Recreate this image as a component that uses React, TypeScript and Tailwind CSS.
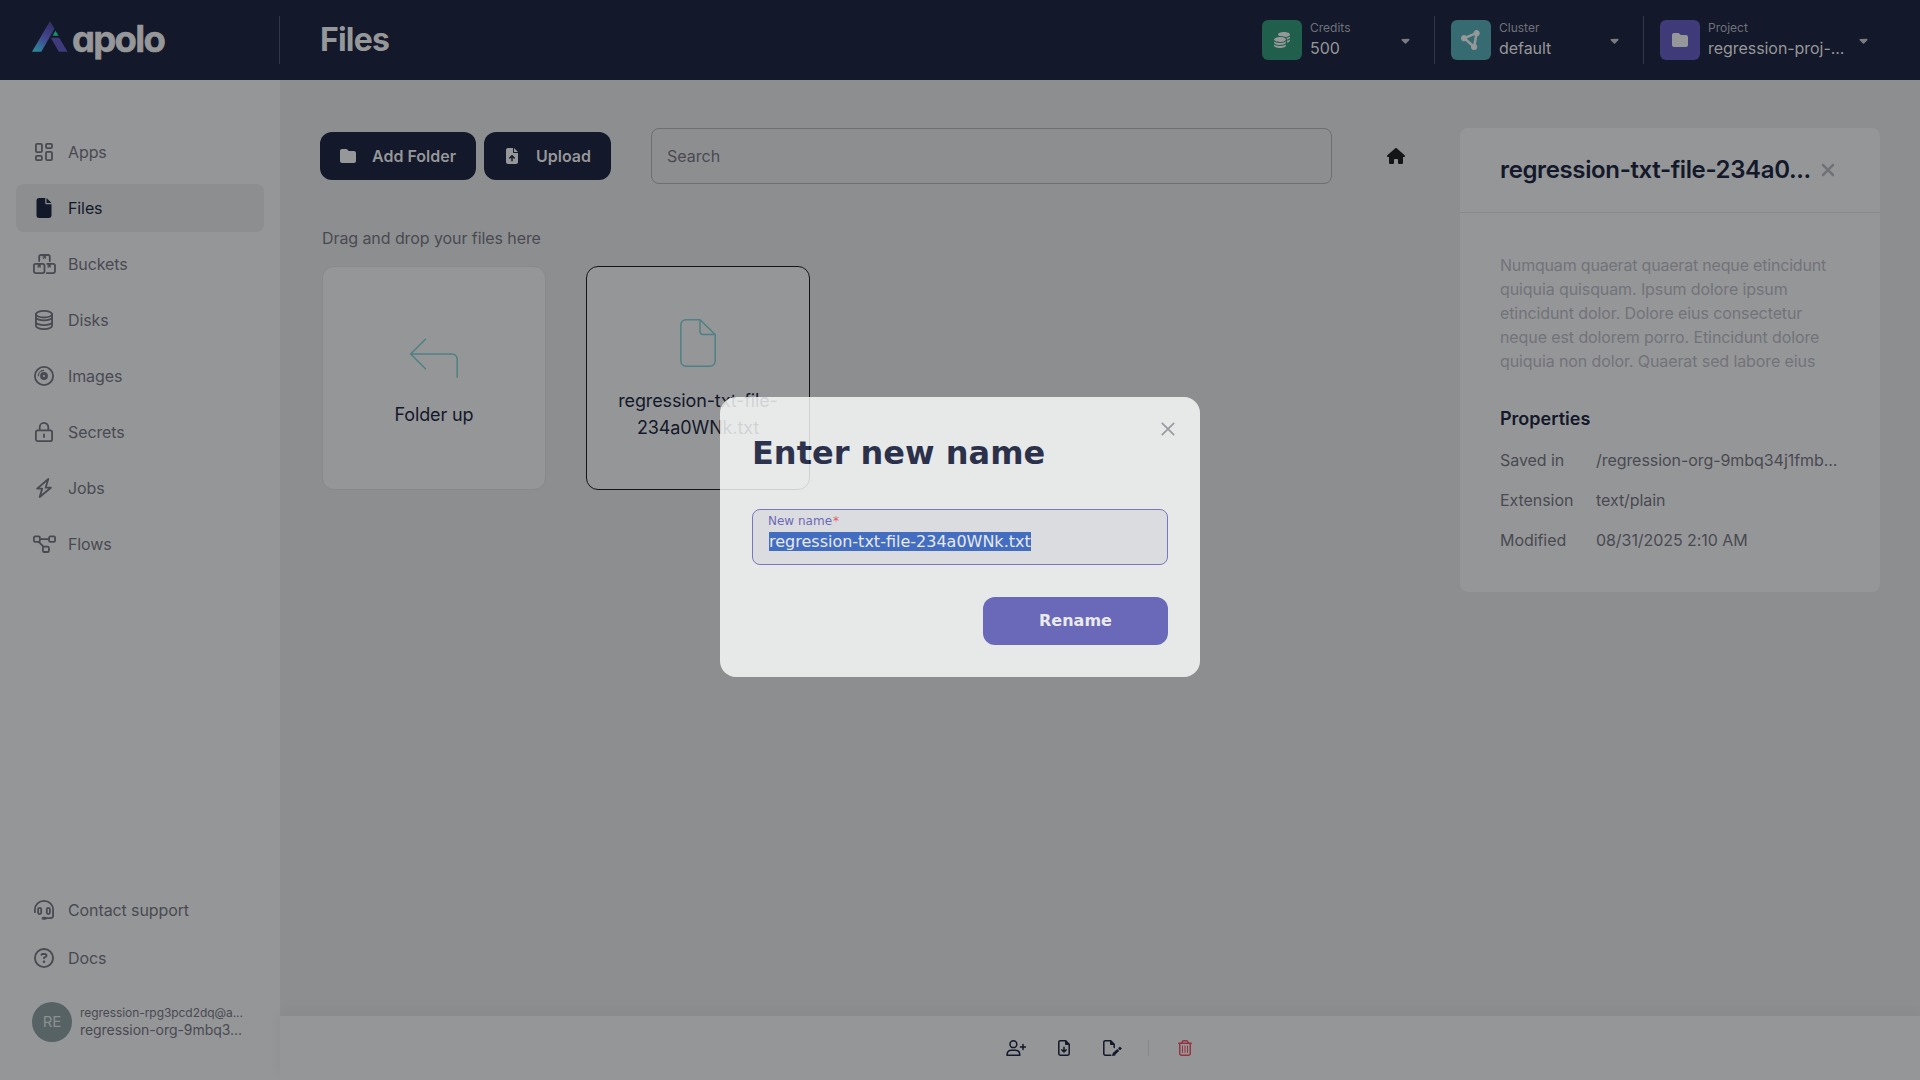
import React from 'react';
import {
  FaCaretDown,
  FaCircleNodes,
  FaCoins,
  FaFile,
  FaFileArrowUp,
  FaFolder,
  FaHouse,
  FaRegCircleQuestion,
  FaRegTrashCan,
  FaXmark,
} from 'react-icons/fa6';

type IconProps = { w: number; h: number; stroke?: number; children: React.ReactNode; className?: string };

function Line({ w, h, stroke = 1.6, children, className }: IconProps) {
  return (
    <svg
      width={w}
      height={h}
      viewBox={`0 0 ${w} ${h}`}
      fill="none"
      stroke="currentColor"
      strokeWidth={stroke}
      strokeLinecap="round"
      strokeLinejoin="round"
      className={className}
    >
      {children}
    </svg>
  );
}

const AppsIcon = () => (
  <Line w={18} h={18} stroke={1.8}>
    <rect x="0.9" y="0.9" width="6" height="8.2" rx="1.2" />
    <rect x="11" y="0.9" width="6" height="4.2" rx="1.2" />
    <rect x="0.9" y="12.9" width="6" height="4.2" rx="1.2" />
    <rect x="11" y="8.9" width="6" height="8.2" rx="1.2" />
  </Line>
);

const BucketsIcon = () => (
  <Line w={23} h={20} stroke={1.8}>
    <path d="M6.2 7V2.7A1.7 1.7 0 0 1 7.9 1h7.2a1.7 1.7 0 0 1 1.7 1.7V7" />
    <rect x="0.9" y="9.8" width="10.6" height="9.3" rx="1.8" />
    <path d="M14.2 9.8h6a1.8 1.8 0 0 1 1.8 1.8v5.7a1.8 1.8 0 0 1-1.8 1.8h-6.4" />
    <path
      d="M10.4 1.2h2.2v3.4l-1.1-.6-1.1.6zM5.2 10h2.2v3.4l-1.1-.6-1.1.6zM15.2 10h2.2v3.4l-1.1-.6-1.1.6z"
      fill="currentColor"
      strokeWidth="0.6"
    />
  </Line>
);

const DisksIcon = () => (
  <Line w={18} h={20} stroke={1.8}>
    <ellipse cx="9" cy="4.2" rx="8.1" ry="3.3" />
    <path d="M.9 4.2v11.6c0 1.8 3.6 3.3 8.1 3.3s8.1-1.5 8.1-3.3V4.2M.9 7.8c1 1.6 4.2 2.5 8.1 2.5s7.1-.9 8.1-2.5M.9 12.6c1 1.6 4.2 2.5 8.1 2.5s7.1-.9 8.1-2.5" />
  </Line>
);

const ImagesIcon = () => (
  <Line w={20} h={20} stroke={1.8}>
    <circle cx="10" cy="10" r="9.1" />
    <circle cx="10" cy="10" r="2.5" strokeWidth="2.8" />
    <path d="M4.4 9.8A5.5 5.5 0 0 1 9.6 4.4" strokeWidth="1.2" />
  </Line>
);

const SecretsIcon = () => (
  <Line w={18} h={20} stroke={1.8}>
    <rect x="0.9" y="8.3" width="16.2" height="10.8" rx="1.9" />
    <path d="M4.7 8V5.2a4.3 4.3 0 0 1 8.6 0V8M9 12.4v2.6" />
  </Line>
);

const JobsIcon = () => (
  <Line w={16} h={20} stroke={1.8}>
    <path d="M12.3 1 1.2 10.6h5L3.7 19 14.8 9.700H9.600z" />
  </Line>
);

const FlowsIcon = () => (
  <Line w={23} h={18} stroke={1.8}>
    <rect x="0.9" y="1.4" width="6" height="5.4" rx="1.3" />
    <rect x="16.1" y="1.4" width="6" height="5.4" rx="1.3" />
    <rect x="9.9" y="11.6" width="6" height="5.4" rx="1.3" />
    <path d="M7 4.1h9M5.8 6.9l4.8 5" />
  </Line>
);

const SupportIcon = () => (
  <Line w={20} h={20} stroke={1.8}>
    <path d="M.9 12.2V9.6C.9 4.8 5 .9 10 .9s9.100 3.900 9.100 8.700v6a2.500 2.500 0 0 1-2.500 2.500H12" />
    <rect x="4.1" y="7.9" width="3.1" height="6.2" rx="1.500" />
    <rect x="12.8" y="7.9" width="3.1" height="6.2" rx="1.500" />
    <path d="M9.2 18.3h2" strokeWidth="3" />
  </Line>
);

const navItems = [
  { label: 'Apps', icon: <AppsIcon /> },
  { label: 'Files', icon: <FaFile size={20} />, active: true },
  { label: 'Buckets', icon: <BucketsIcon /> },
  { label: 'Disks', icon: <DisksIcon /> },
  { label: 'Images', icon: <ImagesIcon /> },
  { label: 'Secrets', icon: <SecretsIcon /> },
  { label: 'Jobs', icon: <JobsIcon /> },
  { label: 'Flows', icon: <FlowsIcon /> },
];

function Logo() {
  return (
    <div className="flex h-10 items-center">
      <svg width="36" height="31" viewBox="0 0 36 31" className="-mt-2">
        <defs>
          <linearGradient id="leg" x1="0" y1="31" x2="20" y2="0" gradientUnits="userSpaceOnUse">
            <stop offset="0.05" stopColor="#2b8a9c" />
            <stop offset="0.5" stopColor="#42478f" />
            <stop offset="1" stopColor="#302c62" />
          </linearGradient>
        </defs>
        <path d="M18 0l4.5 7.7L9.3 30.700H0z" fill="url(#leg)" />
        <path d="M18.8 16.800h8.400l8.400 13.900h-8.800z" fill="#3e3a7c" />
        <path d="M23.4 9.700l3.300 5.100h-6.200z" fill="#109468" />
      </svg>
      <span className="mt-[-3px] ml-[4px] text-[36.5px] leading-10 font-bold tracking-[-1.7px] text-[#969798] [font-feature-settings:'cv11'] [-webkit-text-stroke:0.6px_#969798]">
        apolo
      </span>
    </div>
  );
}

type SelectorProps = { label: string; value: string; tile: string; width: string; children: React.ReactNode };

function Selector({ label, value, tile, width, children }: SelectorProps) {
  return (
    <div className={`flex items-center ${width}`}>
      <div className={`flex size-10 shrink-0 items-center justify-center rounded-[6px] text-[#969798] ${tile}`}>{children}</div>
      <div className="ml-2 flex-1 whitespace-nowrap">
        <div className="text-xs leading-4 text-[#6f727a]">{label}</div>
        <div className="text-base leading-6 tracking-[-0.05px] text-[#969798]">{value}</div>
      </div>
      <FaCaretDown size={13} className="mr-[2px] text-[#7a7c82]" />
    </div>
  );
}

function Header() {
  return (
    <header className="flex h-20 shrink-0 items-center bg-[#13182a]">
      <div className="flex h-12 w-[280px] items-center border-r border-[#33374a] pl-8">
        <Logo />
      </div>
      <h1 className="ml-10 flex-1 text-[32px] leading-10 font-bold tracking-[-0.8px] text-[#969798]">Files</h1>
      <Selector label="Credits" value="500" tile="bg-[#1f5f4c]" width="w-[152px]">
        <FaCoins size={16} />
      </Selector>
      <div className="mr-4 ml-5 h-12 w-px bg-[#33374a]" />
      <Selector label="Cluster" value="default" tile="bg-[#356b71]" width="w-[172px]">
        <FaCircleNodes size={20} />
      </Selector>
      <div className="mr-4 ml-5 h-12 w-px bg-[#33374a]" />
      <Selector label="Project" value="regression-proj-..." tile="bg-[#3e3b78]" width="w-[212px]">
        <FaFolder size={16} />
      </Selector>
      <div className="w-12" />
    </header>
  );
}

function Sidebar() {
  return (
    <aside className="flex w-[280px] shrink-0 flex-col bg-[#959698] px-4 pt-12 tracking-[-0.1px] text-[#494a51]">
      <nav className="flex flex-col gap-2">
        {navItems.map((item) => (
          <a
            key={item.label}
            className={
              item.active
                ? 'flex h-12 items-center rounded-lg bg-[#8d8e90] pl-4 text-[#13182a]'
                : 'flex h-12 items-center rounded-lg pl-4'
            }
          >
            <span className="flex w-6 justify-center">{item.icon}</span>
            <span className="ml-3">{item.label}</span>
          </a>
        ))}
      </nav>
      <div className="mt-auto flex flex-col">
        <a className="flex h-12 items-center pl-4">
          <span className="flex w-6 justify-center">
            <SupportIcon />
          </span>
          <span className="ml-3">Contact support</span>
        </a>
        <a className="flex h-12 items-center pl-4">
          <span className="flex w-6 justify-center">
            <FaRegCircleQuestion size={20} />
          </span>
          <span className="ml-3">Docs</span>
        </a>
      </div>
      <div className="mt-5 mb-[38px] flex h-10 items-center pl-4">
        <div className="flex size-10 items-center justify-center rounded-full bg-[#576265] text-[15px] text-[#8b9092]">RE</div>
        <div className="ml-2 tracking-[-0.06px] whitespace-nowrap">
          <div className="text-xs leading-4">regression-rpg3pcd2dq@a...</div>
          <div className="text-sm leading-[18px]">regression-org-9mbq3...</div>
        </div>
      </div>
    </aside>
  );
}

function Toolbar() {
  return (
    <div className="flex h-16 shrink-0 items-center bg-[#959698] pl-[726px] text-[#13182a] shadow-[0_-4px_12px_rgba(0,0,0,0.04)]">
      <Line w={20} h={16} stroke={1.5}>
        <circle cx="7.4" cy="4.2" r="3.4" />
        <path d="M1 15.200c0-3 2-4.900 4.600-4.900h3.600c2.600 0 4.600 1.900 4.600 4.900zM17 4.400v5.200M14.400 7h5.200" />
      </Line>
      <Line w={12} h={16} stroke={1.5} className="ml-8">
        <path d="M.8 2.200A1.400 1.400 0 0 1 2.200.8h5.600l3.400 3.400v9.600a1.400 1.400 0 0 1-1.400 1.400H2.200A1.400 1.400 0 0 1 .8 13.800zM6 7.200v4.600M3.900 9.900 6 12l2.100-2.100" />
        <path d="M7.500 1v3.500H11z" fill="currentColor" strokeWidth="1" />
      </Line>
      <Line w={19} h={16} stroke={1.5} className="ml-[33px]">
        <path d="M11.200 7.500V4.200L7.800.8H2.200A1.400 1.400 0 0 0 .8 2.200v11.600a1.400 1.400 0 0 0 1.400 1.400h5.600" />
        <path d="M7.500 1v3.500H11z" fill="currentColor" strokeWidth="1" />
        <path d="M10.800 14 15.200 10" strokeWidth="2.800" strokeLinecap="butt" />
        <path d="M9.500 15.400l.8-2.400 1.700 1.800z" fill="currentColor" strokeWidth="0.800" />
        <circle cx="16.900" cy="8.500" r="1.300" fill="currentColor" strokeWidth="0.500" />
      </Line>
      <div className="ml-[26px] h-4 w-px bg-[#85868a]" />
      <FaRegTrashCan size={16} className="ml-7 text-[#953341]" />
    </div>
  );
}

function Details() {
  const rows = [
    ['Saved in', '/regression-org-9mbq34j1fmb...'],
    ['Extension', 'text/plain'],
    ['Modified', '08/31/2025 2:10 AM'],
  ];
  return (
    <section className="mt-12 h-[464px] w-[420px] shrink-0 rounded-lg bg-[#959698]">
      <div className="flex h-[85px] items-center border-b border-[#88898b] px-10 whitespace-nowrap">
        <h2 className="w-[318px] text-2xl font-semibold tracking-[-0.37px] text-[#13182a]">regression-txt-file-234a0...</h2>
        <FaXmark size={20} className="text-[#717277]" />
      </div>
      <p className="mx-10 mt-10 h-[120px] w-[340px] overflow-hidden text-base leading-6 tracking-[-0.1px] text-[#727378]">
        <span className="tracking-[-0.19px]">Numquam quaerat quaerat neque etincidunt</span> quiquia quisquam. Ipsum dolore ipsum
        etincidunt dolor. Dolore eius consectetur neque est dolorem porro. Etincidunt dolore quiquia non dolor. Quaerat
        sed labore eius
      </p>
      <h3 className="mx-10 mt-8 text-lg leading-7 font-semibold text-[#13182a]">Properties</h3>
      <dl className="mx-10 mt-[15px] flex flex-col gap-4 tracking-[-0.06px] whitespace-nowrap text-[#494a51]">
        {rows.map(([k, v]) => (
          <div key={k} className="flex leading-6">
            <dt className="w-24">{k}</dt>
            <dd>{v}</dd>
          </div>
        ))}
      </dl>
    </section>
  );
}

function Browser() {
  return (
    <section className="flex-1 pl-10">
      <div className="flex h-[152px] items-center">
        <button className="flex h-12 w-[156px] items-center rounded-xl bg-[#13182a] pl-5 font-semibold text-[#969798]">
          <FaFolder size={16} />
          <span className="ml-4">Add Folder</span>
        </button>
        <button className="ml-2 flex h-12 w-[127px] items-center rounded-xl bg-[#13182a] pl-5 font-semibold text-[#969798]">
          <FaFileArrowUp size={16} />
          <span className="ml-4">Upload</span>
        </button>
        <div className="ml-10 flex h-14 w-[681px] items-center rounded-lg border border-[#6e6f73] pl-[15px] text-[#494a51]">Search</div>
        <FaHouse size={18} className="mb-px ml-[55px] text-[#141516]" />
      </div>
      <p className="mt-[-6px] ml-0.5 leading-6 tracking-[-0.08px] text-[#494a51]">Drag and drop your files here</p>
      <div className="mt-4 ml-0.5 flex gap-10 text-center text-lg leading-[27px] tracking-[-0.13px] text-[#13182a]">
        <div className="flex size-56 flex-col items-center rounded-xl border border-[#88898b] bg-[#959698] pt-[70px]">
          <Line w={50} h={42} stroke={1.5} className="text-[#4f8184]">
            <path d="M16.5 2.300 1.600 17l14.900 14.700M1.600 17H43a5.200 5.200 0 0 1 5.200 5.200v18.100" />
          </Line>
          <span className="mt-[22px]">Folder up</span>
        </div>
        <div className="flex size-56 flex-col items-center rounded-xl border border-[#141516] bg-[#959698] pt-[52px]">
          <Line w={36} h={48} stroke={1.5} className="text-[#4f8184]">
            <path d="M.8 6A5.200 5.200 0 0 1 6 .8h14L35.200 15.500v26.500a5.200 5.200 0 0 1-5.200 5.200H6A5.200 5.200 0 0 1 .8 42zM20 .8v11.700a3 3 0 0 0 3 3h12.200" />
          </Line>
          <span className="mt-5">
            regression-txt-file-
            <br />
            234a0WNk.txt
          </span>
        </div>
      </div>
    </section>
  );
}

function RenameDialog() {
  return (
    <div className="absolute top-[397px] left-[720px] h-[280px] w-[480px] rounded-2xl bg-[#fcfefd] px-8 font-['DejaVu_Sans',sans-serif] opacity-[0.81]">
      <svg
        width="14"
        height="14"
        viewBox="0 0 14 14"
        className="absolute top-[25px] right-[25px]"
        stroke="#9b9da5"
        strokeWidth="1.7"
        strokeLinecap="round"
      >
        <path d="M1.300 1.300l11.400 11.400M12.700 1.300 1.300 12.700" />
      </svg>
      <h2 className="pt-8 text-[32px] leading-[48px] font-bold text-[#151b3c]">Enter new name</h2>
      <div className="mt-8 h-14 rounded-lg border border-[#7670cf] bg-[#eeeff2] px-[15px]">
        <div className="pt-[3px] text-xs leading-4 text-[#6661c2]">
          New name<span className="ml-px text-[#f0505a]">*</span>
        </div>
        <span className="mt-[3px] ml-px inline-block bg-[#3266cd] text-base leading-[19px] whitespace-nowrap text-white">
          regression-txt-file-234a0WNk.txt
        </span>
      </div>
      <button className="mt-8 ml-auto flex h-12 w-[185px] items-center justify-center rounded-xl bg-[#6160c3] font-bold text-white">
        Rename
      </button>
    </div>
  );
}

export default function App() {
  return (
    <div className="relative flex h-[1080px] w-[1920px] flex-col overflow-hidden bg-[#8d8e90] font-['Inter',sans-serif] text-base">
      <Header />
      <div className="flex min-h-0 flex-1">
        <Sidebar />
        <div className="flex flex-1 flex-col">
          <main className="flex min-h-0 flex-1 pr-10">
            <Browser />
            <Details />
          </main>
          <Toolbar />
        </div>
      </div>
      <RenameDialog />
    </div>
  );
}
